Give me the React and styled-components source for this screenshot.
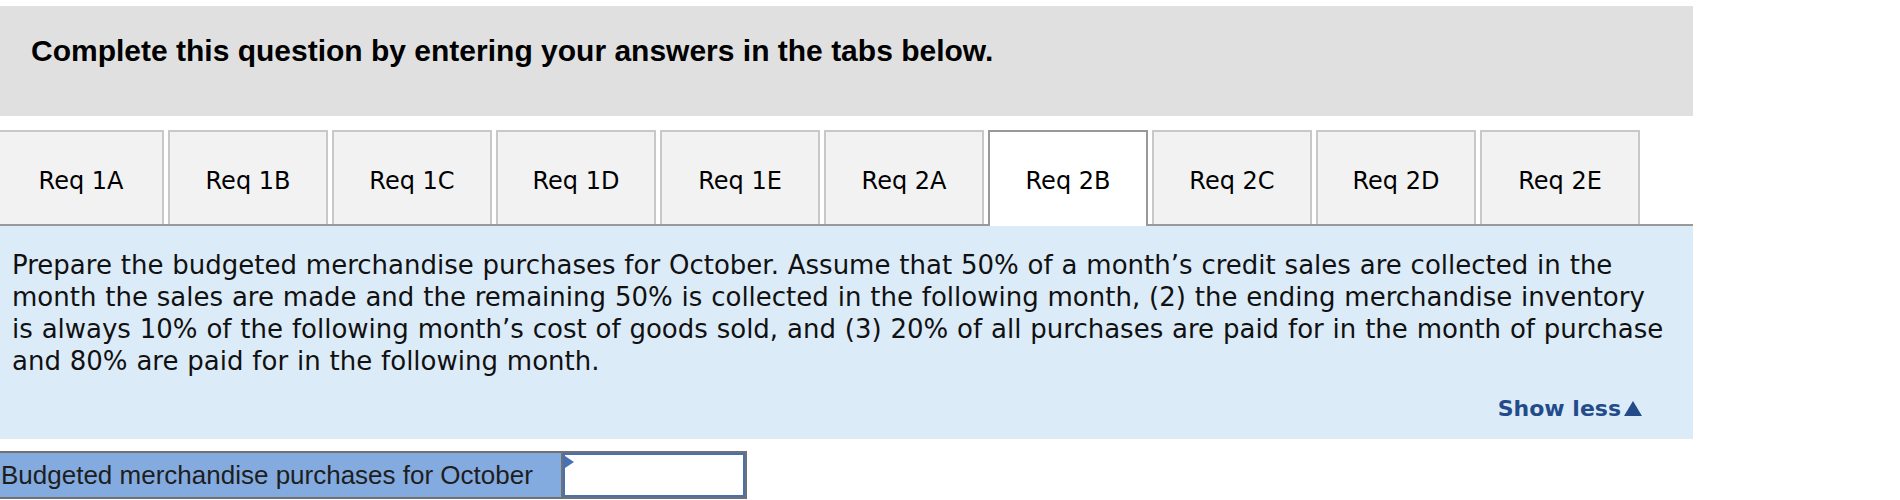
import React, { useState } from "react";
import styled, { createGlobalStyle } from "styled-components";

const GlobalStyle = createGlobalStyle`
  body {
    margin: 0;
    background: #ffffff;
    font-family: "DejaVu Sans", Verdana, sans-serif;
    color: #000;
  }
`;

const Page = styled.div`
  width: 1693px;
  padding-top: 6px;
`;

const Header = styled.div`
  height: 110px;
  box-sizing: border-box;
  background: #e0e0e0;
  padding: 28px 0 0 31px;
`;

const HeaderTitle = styled.h1`
  margin: 0;
  font-family: "Liberation Sans", Arial, sans-serif;
  font-weight: bold;
  font-size: 30px;
  line-height: 34px;
  color: #000;
`;

const TabRow = styled.div`
  display: flex;
  align-items: flex-end;
  gap: 4px;
  margin-top: 14px;
  border-bottom: 2px solid #999999;
`;

const Tab = styled.button`
  flex: none;
  width: 160px;
  height: ${(p) => (p.$active ? "96px" : "94px")};
  margin-bottom: ${(p) => (p.$active ? "-2px" : "0")};
  box-sizing: border-box;
  padding: ${(p) => (p.$active ? "4px 0 0" : "6px 0 0")};
  background: ${(p) => (p.$active ? "#ffffff" : "#f2f2f2")};
  border: 2px solid ${(p) => (p.$active ? "#999999" : "#c8c8c8")};
  border-bottom: none;
  font-family: "DejaVu Sans", Verdana, sans-serif;
  font-size: 24px;
  color: #000;
  cursor: pointer;

  &:first-child {
    width: 166px;
    margin-left: -2px;
  }
`;

const Panel = styled.div`
  background: #dcebf8;
  padding: 23px 51px 14px 12px;
`;

const Prompt = styled.p`
  margin: 0;
  max-width: 1655px;
  margin-right: -51px;
  font-size: 26px;
  line-height: 32px;
  word-spacing: 0.6px;
  color: #111;
`;

const ToggleRow = styled.div`
  margin-top: 16px;
  text-align: right;
`;

const ToggleLink = styled.a`
  font-family: "DejaVu Sans", Verdana, sans-serif;
  font-weight: bold;
  font-size: 22px;
  line-height: 32px;
  color: #234b8a;
  text-decoration: none;
  cursor: pointer;
`;

const Caret = styled.span`
  display: inline-block;
  width: 0;
  height: 0;
  margin-left: 3px;
  border-left: 9.5px solid transparent;
  border-right: 9.5px solid transparent;
  border-bottom: 15px solid #234b8a;
`;

const AnswerTable = styled.div`
  display: flex;
  width: fit-content;
  margin: 12px 0 0 -8px;
  border: 2px solid #717171;
`;

const AnswerLabel = styled.div`
  width: 569px;
  height: 44px;
  box-sizing: border-box;
  padding-left: 7px;
  display: flex;
  align-items: center;
  background: #83abe0;
  border-right: 2px solid #717171;
  font-family: "Liberation Sans", Arial, sans-serif;
  font-size: 26px;
  color: #1e1e1e;
`;

const InputCell = styled.div`
  position: relative;
  width: 182px;
  height: 44px;
`;

const AnswerInput = styled.input`
  width: 100%;
  height: 100%;
  box-sizing: border-box;
  border: 2px solid #4672b5;
  background: #ffffff;
  outline: none;
  font-size: 20px;
  text-align: right;
  padding: 0 6px;
`;

const Marker = styled.span`
  position: absolute;
  left: 2px;
  top: 3px;
  width: 0;
  height: 0;
  border-top: 6px solid transparent;
  border-bottom: 6px solid transparent;
  border-left: 9px solid #4672b5;
`;

const tabs = [
  "Req 1A",
  "Req 1B",
  "Req 1C",
  "Req 1D",
  "Req 1E",
  "Req 2A",
  "Req 2B",
  "Req 2C",
  "Req 2D",
  "Req 2E",
];

export default function App() {
  const [active, setActive] = useState("Req 2B");
  const [value, setValue] = useState("");

  return (
    <Page>
      <GlobalStyle />
      <Header>
        <HeaderTitle>
          Complete this question by entering your answers in the tabs below.
        </HeaderTitle>
      </Header>
      <TabRow>
        {tabs.map((t) => (
          <Tab key={t} $active={t === active} onClick={() => setActive(t)}>
            {t}
          </Tab>
        ))}
      </TabRow>
      <Panel>
        <Prompt>
          Prepare the budgeted merchandise purchases for October. Assume that
          50% of a month’s credit sales are collected in the month the sales
          are made and the remaining 50% is collected in the following month,
          (2) the ending merchandise inventory is always 10% of the following
          month’s cost of goods sold, and (3) 20% of all purchases are paid for
          in the month of purchase and 80% are paid for in the following month.
        </Prompt>
        <ToggleRow>
          <ToggleLink>
            Show less
            <Caret />
          </ToggleLink>
        </ToggleRow>
      </Panel>
      <AnswerTable>
        <AnswerLabel>Budgeted merchandise purchases for October</AnswerLabel>
        <InputCell>
          <AnswerInput
            value={value}
            onChange={(e) => setValue(e.target.value)}
          />
          <Marker />
        </InputCell>
      </AnswerTable>
    </Page>
  );
}
